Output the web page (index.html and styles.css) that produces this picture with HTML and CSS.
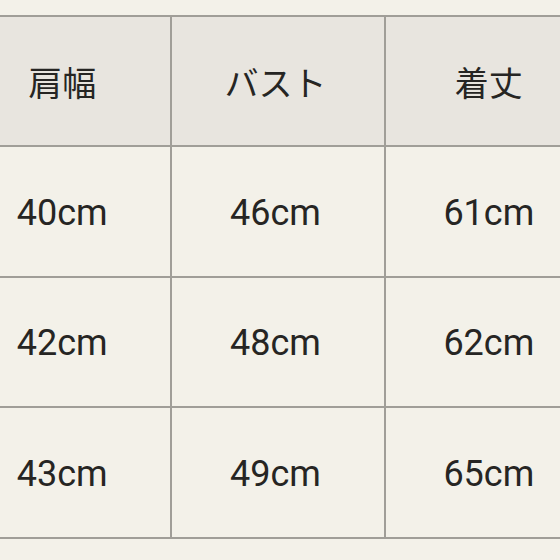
FILE: index.html
```html
<!DOCTYPE html>
<html lang="ja">
<head>
<meta charset="utf-8">
<link rel="stylesheet" href="styles.css">
</head>
<body>
<div class="page">
  <table class="size-table">
    <thead>
      <tr><th>肩幅</th><th>バスト</th><th>着丈</th></tr>
    </thead>
    <tbody>
      <tr><td>40cm</td><td>46cm</td><td>61cm</td></tr>
      <tr><td>42cm</td><td>48cm</td><td>62cm</td></tr>
      <tr><td>43cm</td><td>49cm</td><td>65cm</td></tr>
    </tbody>
  </table>
</div>
</body>
</html>
```
FILE: styles.css
```css
html, body {
  margin: 0;
  padding: 0;
  background: #f3f1e9;
  overflow: hidden;
}
.page {
  width: 560px;
  height: 560px;
  overflow: hidden;
  padding-top: 15px;
  box-sizing: border-box;
}
.size-table {
  border-collapse: collapse;
  width: 642px;
  margin-left: -43px;
  table-layout: fixed;
  color: #262523;
}
.size-table th,
.size-table td {
  border: 2px solid #a09e98;
  height: 130.4px;
  padding: 0 5px 0 0;
  text-align: center;
  vertical-align: middle;
  box-sizing: border-box;
}
.size-table th {
  background: #e8e5df;
  font-family: "Noto Sans CJK JP", "Noto Sans", sans-serif;
  font-weight: 400;
  font-size: 34px;
}
.size-table td {
  font-family: Roboto, "Noto Sans", sans-serif;
  font-size: 36px;
  font-weight: 400;
  padding-top: 3px;
}
```
